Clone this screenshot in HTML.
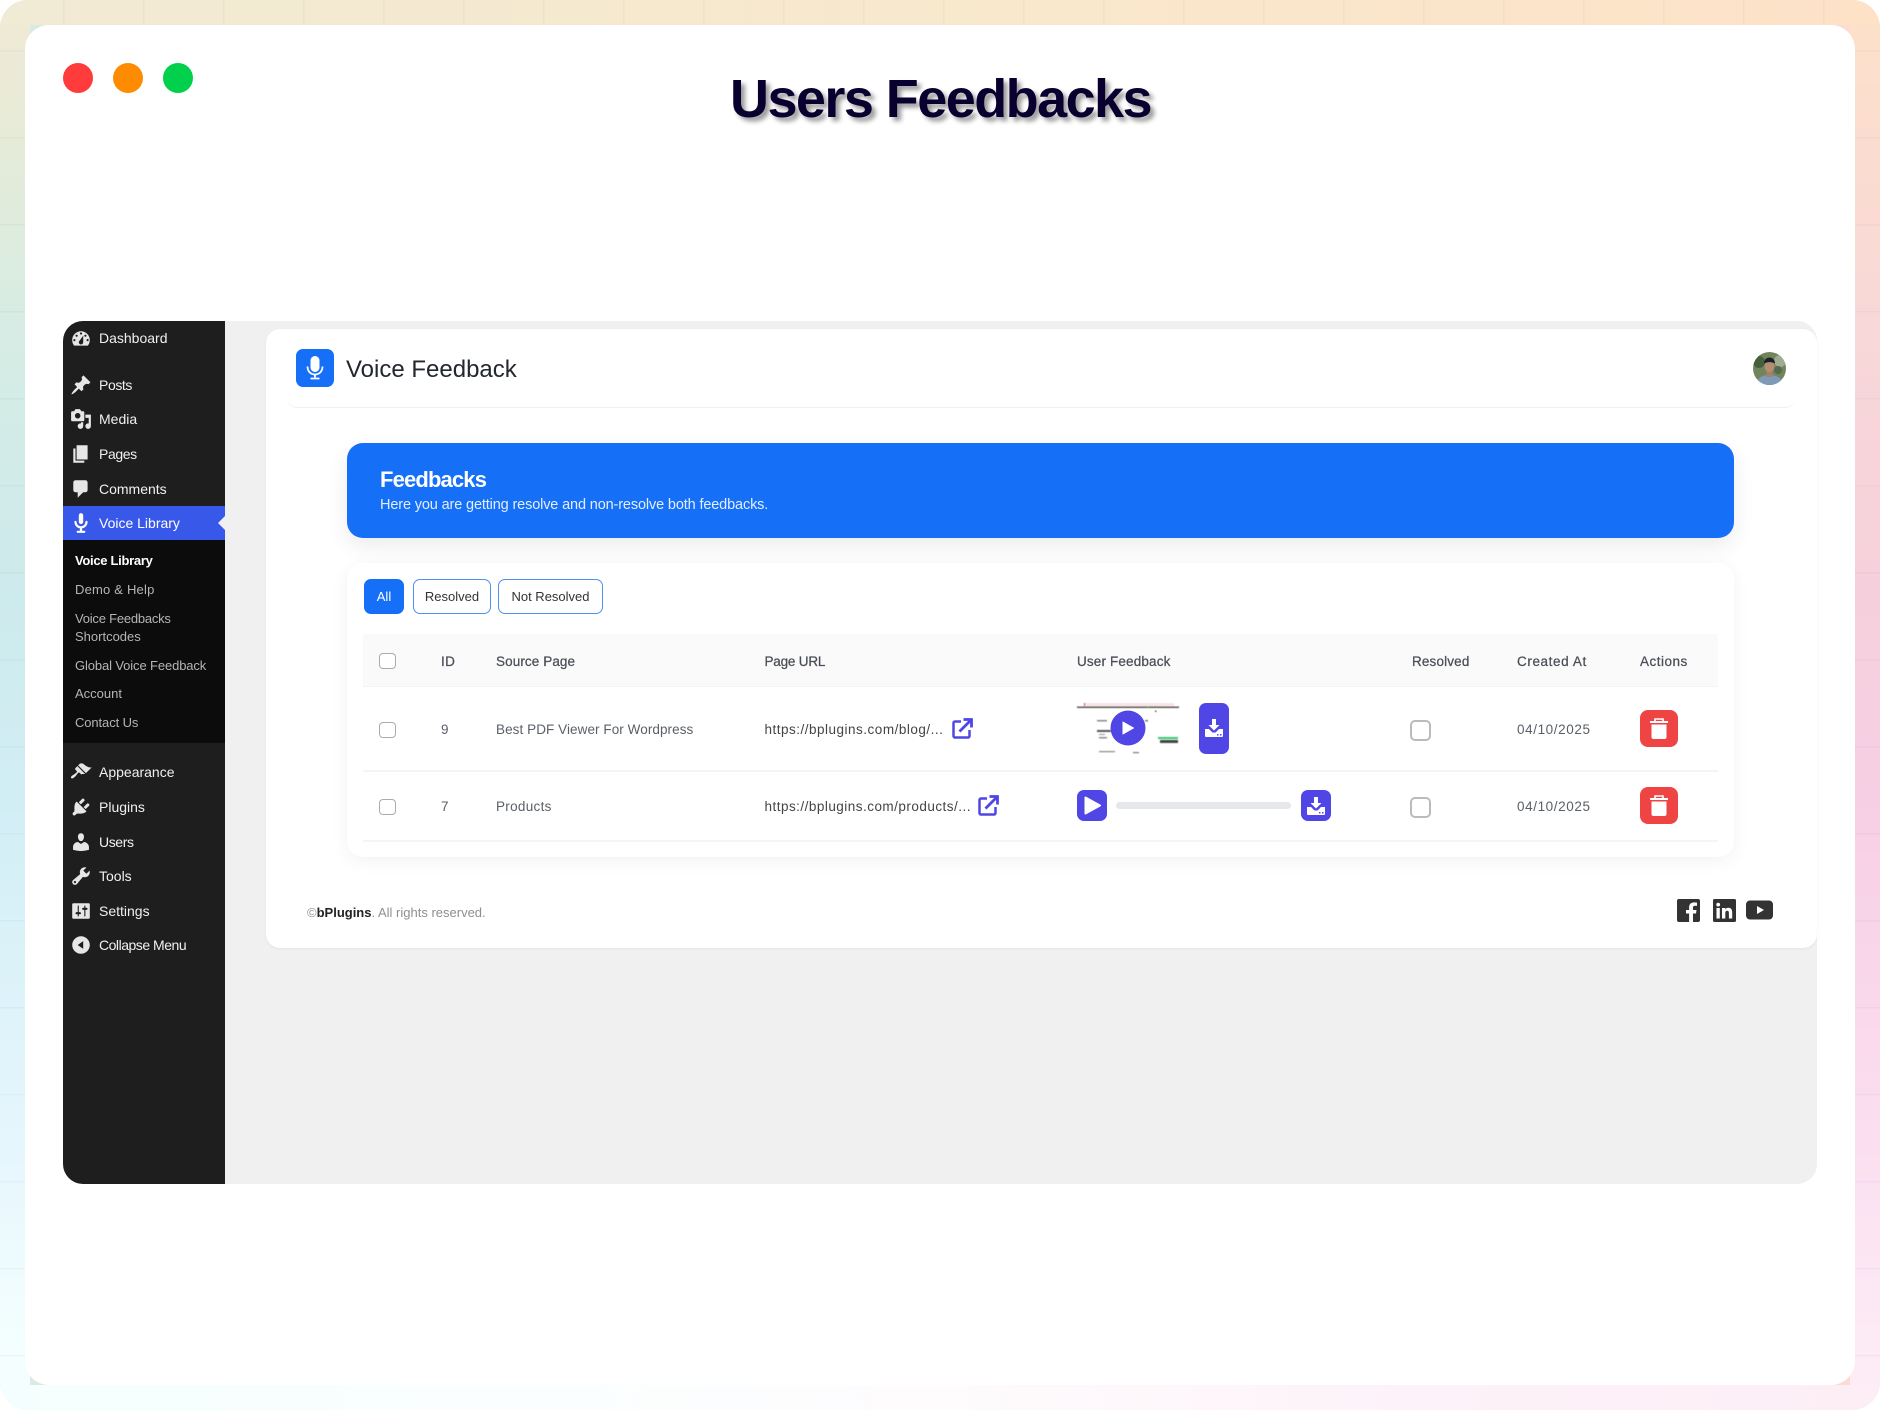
<!DOCTYPE html>
<html lang="en"><head><meta charset="utf-8"><title>Users Feedbacks</title>
<style>
html,body{margin:0;padding:0;width:1880px;height:1410px;overflow:hidden;background:#fff}
body{position:relative;font-family:"Liberation Sans",sans-serif}
.a{position:absolute}
.t{position:absolute;white-space:nowrap;line-height:20px;height:20px}
.side{color:#f0f0f1;font-size:14px;left:99px}
.sub{color:#b5b5b8;font-size:13px;left:75px}
.th{color:#4a4f57;font-size:13.5px;font-weight:400;-webkit-text-stroke:.25px #4a4f57}
.td{color:#5b6068;font-size:13.5px}
.ic{position:absolute;left:70px;width:22px;height:22px;fill:#e6e6e8;margin-top:-1.5px}
.cb{position:absolute;box-sizing:border-box;background:#fff;border:1.5px solid #a9abaf;border-radius:4px}
.cb2{position:absolute;box-sizing:border-box;background:#fff;border:2px solid #b9bbbe;border-radius:5px;width:21px;height:21px;left:1410px}
.btn{position:absolute;box-sizing:border-box;top:579px;height:35px;border-radius:7px;border:1.5px solid #4f8ff0;background:#fff;color:#333;font-size:13px;line-height:34px;text-align:center}
.ind{position:absolute;background:#4f46e5;border-radius:7px}
.del{position:absolute;left:1640px;width:38px;height:37px;background:#ef4444;border-radius:8px}
</style></head><body>

<!-- background -->
<div class="a" style="left:0;top:0;width:1880px;height:1410px;border-radius:28px;overflow:hidden;background:linear-gradient(90deg,#d8ebe2 0,#e9e8d6 30%,#f8e6cd 60%,#fbdcd0 100%)">
  <div class="a" style="left:0;top:0;width:30px;height:1410px;background:linear-gradient(180deg,#f1ead4 0,#e4ebd9 160px,#d6ece4 330px,#cdeaec 600px,#d2eef5 800px,#e6f6fd 1150px,#f1fdfe 1300px,#f6feff 1410px)"></div>
  <div class="a" style="left:1850px;top:0;width:30px;height:1410px;background:linear-gradient(180deg,#fde2c8 0,#fbdcd0 150px,#f8d8d8 330px,#f5d0dc 600px,#f7cfe4 800px,#fbdff0 1150px,#fce8f4 1300px,#fdeef6 1410px)"></div>
  <div class="a" style="left:0;top:0;width:1880px;height:25px;background:linear-gradient(90deg,#f1ead4 0,#f5e9cf 30%,#f9e8cc 55%,#fde2c8 100%)"></div>
  <div class="a" style="left:0;top:1385px;width:1880px;height:25px;background:linear-gradient(90deg,#f5fefe 0,#fbfeff 30%,#fefcfd 50%,#fdf2f9 75%,#fdeef6 100%)"></div>
  <div class="a" style="left:0;top:0;width:1880px;height:1385px;background-image:linear-gradient(90deg,rgba(120,130,170,.07) 1.5px,transparent 1.5px),linear-gradient(180deg,rgba(120,130,170,.07) 1.5px,transparent 1.5px);background-size:80px 87px;background-position:63px 50px"></div>
</div>

<!-- white window -->
<div class="a" style="left:25px;top:25px;width:1830px;height:1360px;background:#fff;border-radius:24px"></div>
<div class="a" style="left:62.5px;top:62.5px;width:30px;height:30px;border-radius:50%;background:#ff3b3b"></div>
<div class="a" style="left:112.5px;top:62.5px;width:30px;height:30px;border-radius:50%;background:#ff8c00"></div>
<div class="a" style="left:162.5px;top:62.5px;width:30px;height:30px;border-radius:50%;background:#00d04c"></div>
<div class="t" style="left:730px;top:64px;height:70px;line-height:70px;font-size:54px;font-weight:700;color:#0a0030;text-shadow:4px 4px 5px rgba(0,0,0,.4);letter-spacing:-1.55px">Users Feedbacks</div>

<!-- panel -->
<div class="a" style="left:63px;top:321px;width:1754px;height:863px;background:#f0f0f0;border-radius:20px;overflow:hidden">
  <div class="a" style="left:0;top:0;width:162px;height:863px;background:#1e1e1e"></div>
  <div class="a" style="left:0;top:185px;width:162px;height:34px;background:#3858e9"></div>
  <div class="a" style="left:0;top:219px;width:162px;height:203px;background:#0c0c0c"></div>
  <div class="a" style="left:155px;top:194px;width:0;height:0;border-top:8px solid transparent;border-bottom:8px solid transparent;border-right:8px solid #f0f0f0"></div>
</div>

<!-- sidebar -->
<svg class="ic" style="top:329px" viewBox="0 0 20 20"><path d="M3.76 16h12.48c1.1-1.37 1.76-3.11 1.76-5 0-4.42-3.58-8-8-8s-8 3.58-8 8c0 1.89.66 3.63 1.76 5zM10 4c.55 0 1 .45 1 1s-.45 1-1 1-1-.45-1-1 .45-1 1-1zM6 6c.55 0 1 .45 1 1s-.45 1-1 1-1-.45-1-1 .45-1 1-1zm8 0c.55 0 1 .45 1 1s-.45 1-1 1-1-.45-1-1 .45-1 1-1zm-5.37 5.55L12 7v6c0 1.1-.9 2-2 2s-2-.9-2-2c0-.57.24-1.08.63-1.45zM4 10c.55 0 1 .45 1 1s-.45 1-1 1-1-.45-1-1 .45-1 1-1zm12 0c.55 0 1 .45 1 1s-.45 1-1 1-1-.45-1-1 .45-1 1-1z"/></svg>
<div class="t side" style="top:328px">Dashboard</div>
<svg class="ic" style="top:375px" viewBox="0 0 20 20"><path d="M10.44 3.02l1.82-1.82 6.36 6.35-1.83 1.82c-1.05-.68-2.48-.57-3.41.36l-.75.75c-.92.93-1.04 2.35-.35 3.41l-1.83 1.82-2.41-2.41-2.8 2.79c-.42.42-3.38 2.71-3.8 2.29s1.86-3.39 2.28-3.81l2.79-2.79L4.1 9.36l1.83-1.82c1.05.69 2.48.57 3.4-.36l.75-.75c.93-.92 1.05-2.35.36-3.41z"/></svg>
<div class="t side" style="top:375px;letter-spacing:-.4px">Posts</div>
<svg class="ic" style="top:409px" viewBox="0 0 20 20"><path d="M13 11V4c0-.55-.45-1-1-1h-1.67L9 1H5L3.67 3H2c-.55 0-1 .45-1 1v7c0 .55.45 1 1 1h10c.55 0 1-.45 1-1zM7 4.500c1.380 0 2.500 1.120 2.500 2.500S8.380 9.500 7 9.500 4.500 8.380 4.500 7 5.620 4.500 7 4.500zM14 6h5v10.500c0 1.380-1.120 2.500-2.500 2.500S14 17.880 14 16.500s1.120-2.500 2.500-2.500c.17 0 .34.02.5.05V9h-3V6zm-4 8.050V13h2v3.500c0 1.380-1.120 2.500-2.500 2.500S7 17.880 7 16.500 8.120 14 9.500 14c.17 0 .34.02.5.05z"/></svg>
<div class="t side" style="top:409px">Media</div>
<svg class="ic" style="top:444px" viewBox="0 0 20 20"><path d="M6 15V2h10v13H6zm-1 1h8v2H3V5h2v11z"/></svg>
<div class="t side" style="top:444px;letter-spacing:-.4px">Pages</div>
<svg class="ic" style="top:479px" viewBox="0 0 20 20"><path d="M5 2h9c1.100 0 2 .9 2 2v7c0 1.100-.9 2-2 2h-2l-5 5v-5H5c-1.100 0-2-.9-2-2V4c0-1.100.9-2 2-2z"/></svg>
<div class="t side" style="top:479px">Comments</div>
<svg class="ic" style="top:513px;fill:#fff" viewBox="0 0 20 20"><path d="M12 9V3c0-1.100-.89-2-2-2-1.120 0-2 .94-2 2v6c0 1.100.9 2 2 2 1.130 0 2-.94 2-2zm4 0c0 2.970-2.160 5.430-5 5.910V17h2c.56 0 1 .45 1 1s-.44 1-1 1H7c-.55 0-1-.45-1-1s.45-1 1-1h2v-2.090C6.170 14.430 4 11.970 4 9c0-.55.45-1 1-1 .56 0 1 .45 1 1 0 2.210 1.800 4 4 4 2.230 0 4-1.790 4-4 0-.55.45-1 1-1 .56 0 1 .45 1 1z"/></svg>
<div class="t side" style="top:513px;color:#fff">Voice Library</div>

<div class="t sub" style="top:551px;color:#fff;font-weight:700;letter-spacing:-.3px">Voice Library</div>
<div class="t sub" style="top:580px;letter-spacing:.2px">Demo &amp; Help</div>
<div class="t sub" style="top:609px;letter-spacing:-.22px">Voice Feedbacks</div>
<div class="t sub" style="top:627px">Shortcodes</div>
<div class="t sub" style="top:655.500px;letter-spacing:-.12px">Global Voice Feedback</div>
<div class="t sub" style="top:684px">Account</div>
<div class="t sub" style="top:713px;letter-spacing:-.1px">Contact Us</div>

<svg class="ic" style="top:762px" viewBox="0 0 20 20"><path d="M14.480 11.060L7.410 3.990l1.500-1.500c.5-.56 2.300-.47 3.510.32 1.210.8 1.430 1.280 2.910 2.100 1.180.64 2.450 1.260 4.450.85zm-.71.71L6.700 4.700 4.930 6.470c-.39.39-.39 1.020 0 1.410l1.060 1.060c.39.39.39 1.030 0 1.420-.6.6-1.430 1.110-2.210 1.690-.35.26-.7.53-1.010.84C1.430 13.230.4 14.850 1.150 15.600c.75.750 2.370-.28 3.700-1.620.31-.31.58-.66.84-1.010.58-.78 1.090-1.610 1.690-2.210.39-.39 1.020-.39 1.410 0l1.060 1.060c.39.39 1.020.39 1.410 0z"/></svg>
<div class="t side" style="top:762px">Appearance</div>
<svg class="ic" style="top:797px" viewBox="0 0 20 20"><path d="M13.110 4.360L9.870 7.600 8 5.730l3.240-3.240c.35-.34 1.050-.2 1.560.32.52.51.66 1.210.31 1.550zm-8 1.770l.91-1.120 9.010 9.010-1.190.84c-.71.71-2.630 1.160-3.820 1.160H6.140L4.900 17.260c-.59.59-1.540.59-2.120 0-.59-.58-.59-1.530 0-2.120l1.240-1.240v-3.880c0-1.130.4-3.190 1.090-3.890zm7.260 3.970l3.240-3.240c.34-.35 1.040-.21 1.550.31.52.51.66 1.210.31 1.550l-3.240 3.250z"/></svg>
<div class="t side" style="top:797px">Plugins</div>
<svg class="ic" style="top:832px" viewBox="0 0 20 20"><path d="M10 9.250c-2.270 0-2.730-3.440-2.730-3.440C7 4.020 7.820 2 9.970 2c2.160 0 2.980 2.020 2.710 3.810 0 0-.41 3.440-2.680 3.440zm0 2.570L12.720 10c2.390 0 4.520 2.330 4.520 4.530v2.490s-3.650 1.130-7.240 1.130c-3.650 0-7.240-1.130-7.240-1.130v-2.490c0-2.250 1.940-4.480 4.470-4.480z"/></svg>
<div class="t side" style="top:832px;letter-spacing:-.4px">Users</div>
<svg class="ic" style="top:866px" viewBox="0 0 20 20"><path d="M16.680 9.770c-1.340 1.340-3.300 1.670-4.950.99l-5.410 6.520c-.99.99-2.590.99-3.580 0s-.99-2.590 0-3.570l6.520-5.420c-.68-1.650-.35-3.610.99-4.950 1.280-1.280 3.120-1.620 4.720-1.060l-2.890 2.890 2.820 2.820 2.860-2.870c.53 1.580.18 3.390-1.080 4.650zM3.810 16.210c.4.39 1.040.39 1.430 0 .4-.4.4-1.040 0-1.430-.39-.4-1.030-.4-1.430 0-.39.39-.39 1.030 0 1.430z"/></svg>
<div class="t side" style="top:866px">Tools</div>
<svg class="ic" style="top:901px" viewBox="0 0 20 20"><path d="M18 16V4c0-.55-.45-1-1-1H3c-.55 0-1 .45-1 1v12c0 .55.45 1 1 1h14c.55 0 1-.45 1-1zM8 11h1c.55 0 1 .45 1 1s-.45 1-1 1H8v1.500c0 .28-.22.5-.5.5s-.5-.22-.5-.5V13H6c-.55 0-1-.45-1-1s.45-1 1-1h1V5.500c0-.28.22-.5.5-.5s.5.22.5.5V11zm5-2h-1c-.55 0-1-.45-1-1s.45-1 1-1h1V5.500c0-.28.22-.5.5-.5s.5.22.5.5V7h1c.55 0 1 .45 1 1s-.45 1-1 1h-1v5.500c0 .28-.22.5-.5.5s-.5-.22-.5-.5V9z" fill-rule="evenodd"/></svg>
<div class="t side" style="top:901px">Settings</div>
<svg class="ic" style="top:935px" viewBox="0 0 20 20"><path fill-rule="evenodd" d="M10 2c4.420 0 8 3.580 8 8s-3.580 8-8 8-8-3.580-8-8 3.580-8 8-8zm2 4.500L7 10l5 3.500z"/></svg>
<div class="t side" style="top:935px;letter-spacing:-.48px">Collapse Menu</div>

<!-- main card -->
<div class="a" style="left:266px;top:329px;width:1551px;height:619px;background:#fff;border-radius:14px;box-shadow:0 1px 3px rgba(0,0,0,.05)"></div>
<div class="a" style="left:287px;top:380px;width:1508px;height:27px;border-bottom:1.500px solid #f0f1f2;border-radius:0 0 10px 10px"></div>
<div class="a" style="left:296px;top:349px;width:38px;height:38px;background:#156ff7;border-radius:7px"></div>
<svg class="a" style="left:301px;top:354px;width:28px;height:28px" viewBox="0 0 28 28"><rect x="9.500" y="2" width="9" height="16" rx="4.500" fill="#fff"/><path d="M6.500 12.500c0 5 3.400 8 7.500 8s7.500-3 7.500-8" fill="none" stroke="#fff" stroke-width="1.800"/><path d="M14 20v3.500M9.500 24.500h9" stroke="#fff" stroke-width="1.800" fill="none"/></svg>
<div class="t" style="left:346px;top:356px;height:28px;line-height:28px;font-size:24px;color:#23272e">Voice Feedback</div>

<svg class="a" style="left:1752.500px;top:351.500px;width:33px;height:33px" viewBox="0 0 33 33"><defs><clipPath id="av"><circle cx="16.500" cy="16.500" r="16.500"/></clipPath></defs><g clip-path="url(#av)"><rect width="33" height="33" fill="#71845c"/><circle cx="6" cy="10" r="6" fill="#47603c"/><circle cx="27" cy="9" r="6" fill="#a0ac92"/><circle cx="25" cy="18" r="4" fill="#55694c"/><path d="M3 33c1-7 6-10 13.500-10S29 26 30 33z" fill="#7d9ab8"/><rect x="13.500" y="17" width="6" height="8" fill="#a78068"/><ellipse cx="16.500" cy="14" rx="5" ry="6" fill="#b58d72"/><path d="M11 12c0-5 3-6.500 5.500-6.500S22 7 22 12c-2-2.500-9-2.500-11 0z" fill="#1a2029"/></g></svg>

<!-- banner -->
<div class="a" style="left:347px;top:443px;width:1387px;height:95px;background:#156ff7;border-radius:16px;box-shadow:0 8px 22px rgba(0,0,0,.08)"></div>
<div class="t" style="left:380px;top:466.500px;height:26px;line-height:26px;font-size:22px;font-weight:700;color:#fff;letter-spacing:-.85px">Feedbacks</div>
<div class="t" style="left:380px;top:495px;font-size:14.500px;color:#e3eeff;letter-spacing:-.14px">Here you are getting resolve and non-resolve both feedbacks.</div>

<!-- table card -->
<div class="a" style="left:347px;top:563px;width:1387px;height:294px;background:#fff;border-radius:16px;box-shadow:0 4px 18px rgba(0,0,0,.055)"></div>
<div class="btn" style="left:364px;width:40px;background:#156ff7;border-color:#156ff7;color:#fff">All</div>
<div class="btn" style="left:413px;width:78px">Resolved</div>
<div class="btn" style="left:498px;width:105px">Not Resolved</div>

<div class="a" style="left:363px;top:634px;width:1355px;height:52px;background:#fafafa;border-bottom:1.500px solid #f3f4f5"></div>
<div class="a" style="left:363px;top:770px;width:1355px;height:1.500px;background:#f3f4f5"></div>
<div class="a" style="left:363px;top:840px;width:1355px;height:1.500px;background:#f5f5f6"></div>

<div class="cb" style="left:379px;top:652.500px;width:17px;height:16.500px"></div>
<div class="t th" style="left:441px;top:652px;letter-spacing:.4px">ID</div>
<div class="t th" style="left:496px;top:652px;letter-spacing:.1px">Source Page</div>
<div class="t th" style="left:764.500px;top:652px;letter-spacing:-.2px">Page URL</div>
<div class="t th" style="left:1077px;top:652px;letter-spacing:.15px">User Feedback</div>
<div class="t th" style="left:1412px;top:652px;letter-spacing:.15px">Resolved</div>
<div class="t th" style="left:1517px;top:652px;letter-spacing:.6px">Created At</div>
<div class="t th" style="left:1640px;top:652px;letter-spacing:.5px">Actions</div>

<!-- row 1 -->
<div class="cb" style="left:379px;top:721.500px;width:17px;height:16.500px"></div>
<div class="t td" style="left:441px;top:720px">9</div>
<div class="t td" style="left:496px;top:720px;letter-spacing:.07px">Best PDF Viewer For Wordpress</div>
<div class="t td" style="left:764.500px;top:720px;color:#444;letter-spacing:.5px">https://bplugins.com/blog/...</div>
<svg class="a" style="left:952px;top:718px;width:21px;height:21px" viewBox="0 0 21 21"><path d="M9 3.500H3a1.500 1.500 0 0 0-1.500 1.500v13A1.500 1.500 0 0 0 3 19.500h13a1.500 1.500 0 0 0 1.500-1.500v-6" fill="none" stroke="#4f46e5" stroke-width="2.500"/><path d="M7.500 13.500 18.500 2.500M11.500 1.500h8v8" fill="none" stroke="#4f46e5" stroke-width="2.800"/></svg>

<!-- thumbnail -->
<svg class="a" style="left:1077px;top:703px;width:102px;height:51px;filter:blur(.6px)" viewBox="0 0 102 51">
<rect x="0" y="0" width="102" height="51" fill="#fff"/>
<rect x="7" y="0" width="90" height="3" fill="#fbe3e3"/>
<rect x="0" y="3.500" width="102" height="1.500" fill="#555"/>
<rect x="7" y="0" width="1" height="3" fill="#c55"/>
<rect x="70" y="3.500" width="1.500" height="1.500" fill="#2a2"/>
<rect x="78" y="7.500" width="1.500" height="1.500" fill="#555"/>
<rect x="20" y="17" width="10" height="1.500" fill="#888"/>
<rect x="20" y="27" width="14" height="2" fill="#555"/>
<rect x="22" y="31" width="6" height="1" fill="#999"/>
<rect x="22" y="34" width="8" height="1.500" fill="#888"/>
<rect x="68" y="17" width="3" height="1.500" fill="#777"/>
<rect x="81" y="34" width="20" height="2" fill="#2ecc71"/>
<rect x="83" y="37" width="18" height="3" fill="#444"/>
<rect x="22" y="48" width="16" height="1.200" fill="#888"/>
<rect x="56" y="49" width="6" height="1.200" fill="#777"/>
</svg>
<svg class="a" style="left:1077px;top:703px;width:102px;height:51px" viewBox="0 0 102 51">
<circle cx="51" cy="25" r="17.500" fill="#4f46e5"/>
<path d="M46 19l10.500 6L46 31z" fill="#fff" stroke="#fff" stroke-linejoin="round"/>
</svg>
<div class="ind" style="left:1199px;top:703px;width:30px;height:51px"></div>
<svg class="a" style="left:1205px;top:719px;width:18px;height:18px" viewBox="0 0 18 18"><path d="M7 0h4v6h3.500L9 11.500 3.500 6H7z" fill="#fff"/><path d="M0 10h4l3.500 3.500h3L14 10h4v7a1 1 0 0 1-1 1H1a1 1 0 0 1-1-1z" fill="#fff"/><rect x="12" y="15" width="1.500" height="1.500" fill="#4f46e5"/><rect x="15" y="15" width="1.500" height="1.500" fill="#4f46e5"/></svg>
<div class="cb2" style="top:720px"></div>
<div class="t td" style="left:1517px;top:720px;letter-spacing:.6px">04/10/2025</div>
<div class="del" style="top:710px"></div>
<svg class="a" style="left:1649px;top:718px;width:20px;height:21px" viewBox="0 0 20 21"><path d="M1 3h18v2H1z" fill="#fff"/><path d="M6 3V1h8v2" fill="none" stroke="#fff" stroke-width="1.600"/><path d="M2.500 6.500h15V19a2 2 0 0 1-2 2h-11a2 2 0 0 1-2-2z" fill="#fff"/></svg>

<!-- row 2 -->
<div class="cb" style="left:379px;top:798.500px;width:17px;height:16.500px"></div>
<div class="t td" style="left:441px;top:797px">7</div>
<div class="t td" style="left:496px;top:797px;letter-spacing:.3px">Products</div>
<div class="t td" style="left:764.500px;top:797px;color:#444;letter-spacing:.48px">https://bplugins.com/products/...</div>
<svg class="a" style="left:978px;top:795px;width:21px;height:21px" viewBox="0 0 21 21"><path d="M9 3.500H3a1.500 1.500 0 0 0-1.500 1.500v13A1.500 1.500 0 0 0 3 19.500h13a1.500 1.500 0 0 0 1.500-1.500v-6" fill="none" stroke="#4f46e5" stroke-width="2.500"/><path d="M7.500 13.500 18.500 2.500M11.500 1.500h8v8" fill="none" stroke="#4f46e5" stroke-width="2.800"/></svg>
<div class="ind" style="left:1077px;top:790px;width:30px;height:31px"></div>
<svg class="a" style="left:1084px;top:796px;width:18px;height:19px" viewBox="0 0 18 19"><path d="M1.500 1.500 16 9.500 1.500 17.500z" fill="#fff" stroke="#fff" stroke-width="2" stroke-linejoin="round"/></svg>
<div class="a" style="left:1116px;top:802px;width:175px;height:7px;background:#e5e7eb;border-radius:4px"></div>
<div class="ind" style="left:1301px;top:790px;width:30px;height:31px"></div>
<svg class="a" style="left:1307px;top:797px;width:18px;height:18px" viewBox="0 0 18 18"><path d="M7 0h4v6h3.500L9 11.500 3.500 6H7z" fill="#fff"/><path d="M0 10h4l3.500 3.500h3L14 10h4v7a1 1 0 0 1-1 1H1a1 1 0 0 1-1-1z" fill="#fff"/><rect x="12" y="15" width="1.500" height="1.500" fill="#4f46e5"/><rect x="15" y="15" width="1.500" height="1.500" fill="#4f46e5"/></svg>
<div class="cb2" style="top:797px"></div>
<div class="t td" style="left:1517px;top:797px;letter-spacing:.6px">04/10/2025</div>
<div class="del" style="top:787px"></div>
<svg class="a" style="left:1649px;top:795px;width:20px;height:21px" viewBox="0 0 20 21"><path d="M1 3h18v2H1z" fill="#fff"/><path d="M6 3V1h8v2" fill="none" stroke="#fff" stroke-width="1.600"/><path d="M2.500 6.500h15V19a2 2 0 0 1-2 2h-11a2 2 0 0 1-2-2z" fill="#fff"/></svg>

<!-- footer -->
<div class="t" style="left:307px;top:903px;font-size:13px;color:#8c8f94">©<b style="color:#222">bPlugins</b>. All rights reserved.</div>
<svg class="a" style="left:1677px;top:899px;width:23px;height:23px" viewBox="0 0 23 23"><path fill="#333" fill-rule="evenodd" d="M2 0h19a2 2 0 0 1 2 2v19a2 2 0 0 1-2 2h-5v-8.500h3l.5-3.500H16V8.500c0-1 .5-1.800 1.900-1.800H20V3.600c-.8-.1-1.800-.2-2.900-.2-3 0-5 1.800-5 5V11H9v3.500h3.100V23H2a2 2 0 0 1-2-2V2a2 2 0 0 1 2-2z"/></svg>
<svg class="a" style="left:1713px;top:899px;width:23px;height:23px" viewBox="0 0 23 23"><path fill="#333" fill-rule="evenodd" d="M1.500 0h20A1.500 1.500 0 0 1 23 1.500v20a1.500 1.500 0 0 1-1.500 1.500h-20A1.500 1.500 0 0 1 0 21.500v-20A1.500 1.500 0 0 1 1.500 0zM3.500 9v10.500h3.300V9zM5.200 3.700a1.900 1.900 0 1 0 0 3.800 1.900 1.900 0 0 0 0-3.800zM9 9v10.500h3.300v-5.400c0-1.500.6-2.400 1.900-2.400s1.700.9 1.700 2.400v5.400h3.300v-6.200c0-3-1.500-4.500-3.800-4.500-1.500 0-2.600.7-3.100 1.700V9z"/></svg>
<svg class="a" style="left:1746px;top:900px;width:27px;height:20px" viewBox="0 0 27 20"><path fill="#333" fill-rule="evenodd" d="M4 .5h19a4 4 0 0 1 4 4v11a4 4 0 0 1-4 4H4a4 4 0 0 1-4-4v-11a4 4 0 0 1 4-4zM11 6v8l7-4z"/></svg>
</body></html>
